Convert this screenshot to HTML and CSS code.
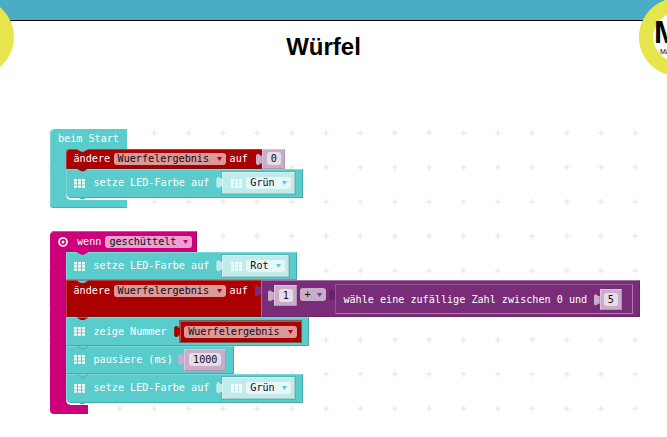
FILE: index.html
```html
<!DOCTYPE html>
<html lang="de">
<head>
<meta charset="utf-8">
<title>Würfel</title>
<link rel="stylesheet" href="styles.css">
</head>
<body>
<svg class="defs" width="0" height="0">
  <symbol id="leds" viewBox="0 0 11 9">
    <path fill="currentColor" d="M0 0h3v2.4H0zM4 0h3v2.4H4zM8 0h3v2.4H8zM0 3.2h3v2.4H0zM4 3.2h3v2.4H4zM8 3.2h3v2.4H8zM0 6.4h3v2.4H0zM4 6.4h3v2.4H4zM8 6.4h3v2.4H8z"/>
  </symbol>
  <symbol id="arrow" viewBox="0 0 5 4"><path fill="currentColor" d="M0 0h5L2.5 4z"/></symbol>
  <symbol id="shake" viewBox="0 0 10 10">
    <circle cx="5" cy="5" r="4" fill="none" stroke="#fff" stroke-width="1.7"/><circle cx="5" cy="5" r="1.5" fill="#fff"/>
  </symbol>
</svg>
<header class="bar">
  <div class="disc disc-left"></div>
  <div class="disc disc-right"><div class="logo"><b>M</b><span>Ma</span></div></div>
</header>
<main>
  <h1>Würfel</h1>
  <div class="workspace">
    <svg class="grid" width="610" height="300">
      <pattern id="cross" width="34.38" height="34.45" patternUnits="userSpaceOnUse">
        <path d="M2 5h6M5 2v6" stroke="#e2e2e2" stroke-width="1"/>
      </pattern>
      <rect width="595" height="285" fill="url(#cross)"/>
    </svg>

    <section class="stack start">
      <div class="hat"><span>beim Start</span></div>
      <div class="body">
        <div class="row red from-teal set">
          <span>ändere</span><span class="field rose">Wuerfelergebnis<svg class="arr"><use href="#arrow"/></svg></span><span>auf</span>
          <div class="value lilac flush"><span class="field num">0</span></div>
        </div>
        <div class="row teal from-red led last">
          <svg class="leds"><use href="#leds"/></svg><span>setze LED-Farbe auf</span>
          <div class="value pale"><svg class="leds"><use href="#leds"/></svg><span class="field mint">Grün<svg class="arr"><use href="#arrow"/></svg></span></div>
        </div>
      </div>
      <div class="foot"></div>
    </section>

    <section class="stack event">
      <div class="hat"><svg class="shake"><use href="#shake"/></svg><span>wenn</span><span class="field pinkish">geschüttelt<svg class="arr"><use href="#arrow"/></svg></span></div>
      <div class="body">
        <div class="row teal from-pink led">
          <svg class="leds"><use href="#leds"/></svg><span>setze LED-Farbe auf</span>
          <div class="value pale"><svg class="leds"><use href="#leds"/></svg><span class="field mint short">Rot<svg class="arr"><use href="#arrow"/></svg></span></div>
        </div>
        <div class="row red from-teal set tall">
          <span>ändere</span><span class="field rose">Wuerfelergebnis<svg class="arr"><use href="#arrow"/></svg></span><span>auf</span>
          <div class="value purple sum">
            <div class="value lilac one"><span class="field num">1</span></div>
            <span class="field op">+<svg class="arr"><use href="#arrow"/></svg></span>
            <div class="value purple random"><span>wähle eine zufällige Zahl zwischen 0 und</span>
              <div class="value lilac five"><span class="field num">5</span></div>
            </div>
          </div>
        </div>
        <div class="row teal from-red led">
          <svg class="leds"><use href="#leds"/></svg><span>zeige Nummer</span>
          <div class="value redv"><span class="field rose">Wuerfelergebnis<svg class="arr"><use href="#arrow"/></svg></span></div>
        </div>
        <div class="row teal from-teal led">
          <svg class="leds"><use href="#leds"/></svg><span>pausiere (ms)</span>
          <div class="value lilac pause"><span class="field num">1000</span></div>
        </div>
        <div class="row teal from-teal led last">
          <svg class="leds"><use href="#leds"/></svg><span>setze LED-Farbe auf</span>
          <div class="value pale"><svg class="leds"><use href="#leds"/></svg><span class="field mint">Grün<svg class="arr"><use href="#arrow"/></svg></span></div>
        </div>
      </div>
      <div class="foot"></div>
    </section>
  </div>
</main>
</body>
</html>
```
FILE: styles.css
```css
* { box-sizing: border-box; }
body { margin: 0; height: 437px; overflow: hidden; background: #fff; font-family: "Liberation Sans", Arial, sans-serif; }
.defs { position: absolute; }
.bar { position: relative; height: 21px; background: #4bacc6; border-bottom: 1px solid #000; }
.disc { position: absolute; top: -2px; width: 78px; height: 78px; border-radius: 50%; background: #e6e64c; }
.disc-left { left: -64px; }
.disc-right { left: 639px; width: 28px; overflow: hidden; border-radius: 0; background: radial-gradient(circle at 39px 39px, #fff 24.5px, #e6e64c 25px, #e6e64c 38.7px, transparent 39.3px); }
.logo { display: flex; flex-direction: column; padding: 20px 0 0 15px; }
.logo b { font-size: 31px; line-height: 30px; }
.logo span { font-size: 7px; line-height: 7px; padding-left: 6px; }
main { display: flex; flex-direction: column; }
h1 { width: 647px; margin: 12px 0 0; font-size: 24px; line-height: 28px; text-align: center; }
.workspace { position: relative; height: 309px; margin: 67px 0 0 46px; font: 10.15px/12px "DejaVu Sans Mono", "Liberation Mono", monospace; color: #fff; }
.grid { display: block; }
.stack { position: absolute; border-radius: 5px 0 0 4px; white-space: nowrap; }
.start { left: 4px; top: 1px; width: 77px; background: #5bcccc; box-shadow: inset 0 -1px #49aeb0, inset 1px 0 #7cd6d6; }
.event { left: 4px; top: 103px; width: 38px; background: #cc007a; }
.hat { display: flex; align-items: center; border-radius: 5px 0 0 0; }
.start .hat { height: 20px; width: 77px; padding-left: 8px; }
.event .hat { height: 21px; width: 147px; padding-left: 8px; background: #cc007a; box-shadow: inset 0 1px #dd4ba2, inset -1px 0 #a90066; }
.shake { width: 10px; height: 10px; margin-right: 9px; }
.pinkish { margin-left: 4px; width: 87px; background: #eba0cf; --arrow: #cc007a; }
.body { margin-left: 15.5px; width: max-content; position: relative; }
.foot { height: 9px; margin-top: 2px; }
.start .foot { height: 8px; }
.body::before { content: ""; position: absolute; left: 0; bottom: -2px; width: 62px; height: 10px; background: #fff; border-radius: 0 0 0 5px; }
.event .body::before { width: 23px; }
.row { position: relative; display: flex; align-items: center; width: max-content; height: 28.4px; padding: 0 8px; box-shadow: inset 1px 1px rgba(255,255,255,.22), inset -1px -1px rgba(0,70,80,.25); }
.row::before, .last::after { content: ""; position: absolute; left: 11px; top: 0; width: 12px; height: 3px; clip-path: polygon(0 0, 100% 0, 68% 75%, 50% 100%, 32% 75%); background: var(--prev); }
.from-teal { --prev: #5bcccc; }
.from-red { --prev: #aa0000; }
.from-pink { --prev: #cc007a; }
.teal.from-teal::before { background: #49a9ad; height: 4px; clip-path: polygon(0 0, 12% 0, 36% 62%, 50% 75%, 64% 62%, 88% 0, 100% 0, 68% 75%, 50% 100%, 32% 75%); }
.last { border-radius: 0 0 0 5px; }
.row.last::after { top: 100%; margin-top: -1px; background: #49b2b5; }
.teal { background: #5bcccc; }
.red, .redv { background: #aa0000; --plug: #aa0000; }
.start .set { height: 19.5px; padding-right: 0; border-radius: 4px 0 0 0; }
.start .led { height: 29px; }
.tall { height: 37px; padding-right: 0; align-items: flex-start; }
.tall > span { margin-top: 5px; }
.field { display: flex; align-items: center; justify-content: space-between; height: 12px; padding: 0 4px; border-radius: 3px; color: #130d12; }
.arr { width: 5px; height: 4px; color: var(--arrow); }
.rose { width: 112.5px; background: #dd9999; --arrow: #aa0000; }
.set > .rose { margin: 0 3.5px; }
.tall > .rose { margin-top: 5px; }
.leds { width: 11px; height: 9px; flex: none; }
.led > .leds { margin-right: 9px; }
.value { position: relative; display: flex; align-items: center; flex: none; height: 22px; margin-left: 13px; box-shadow: inset 1px 1px rgba(255,255,255,.3), inset -1px -1px rgba(0,0,0,.13); }
.value::before { content: ""; position: absolute; left: -6px; top: 5px; width: 6px; height: 11px; background: var(--plug); clip-path: polygon(0 15%, 20% 0, 55% 0, 65% 14%, 100% 14%, 100% 86%, 65% 86%, 55% 100%, 20% 100%, 0 85%); }
.lilac { background: #c9adcb; --plug: #c9adcb; padding: 0 4px; }
.num { width: 14px; height: 13px; justify-content: center; background: #e7dce8; }
.flush { height: 19.5px; width: 23px; margin-left: 14px; padding-left: 5px; }
.pale { background: #bfebeb; --plug: #bfebeb; padding: 0 4px 0 9px; outline: 1px solid #4fb7b9; }
.pale .field { margin-left: 4px; }
.mint { width: 45px; background: #e5f7f7; --arrow: #5bcccc; }
.short { width: 38.5px; }
.redv { height: 21px; margin-left: 13.5px; padding: 0 4px; outline: 1px solid #7f5d5e; }
.pause { padding: 0 5px; margin-left: 11.5px; }
.pause .num { width: 32px; }
.purple { background: #792d79; --plug: #792d79; }
.sum { width: 379px; height: 37px; padding-left: 13px; align-items: flex-start; }
.sum > .one { height: 20.5px; margin: 5px 0 0; width: 23.5px; padding-left: 5px; }
.op { width: 26px; height: 13px; margin: 8px 0 0 3px; background: #c9adcb; --arrow: #793f79; }
.random { width: 298px; height: 30px; margin: 4px 0 0 9px; padding: 1px 0 0 8px; box-shadow: inset 1px 1px #925792, inset -1px -1px #ab7cab; }
.random::before { background: #642364; }
.five { height: 21px; margin-left: 12.5px; }
```
